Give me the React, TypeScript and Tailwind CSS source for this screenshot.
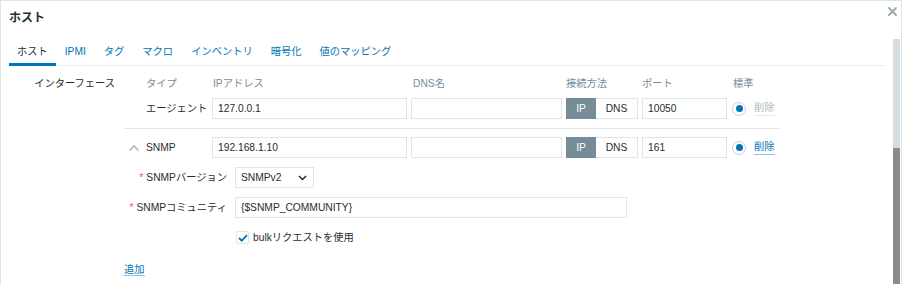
import React from 'react';

const FONT = '"Liberation Sans", "Noto Sans CJK JP", Arial, sans-serif';

/* ── small pieces ── */
const TextInput = ({ value = '', width }: { value?: string; width: string }) => (
  <div className={`${width} h-[21px] border border-[#dfe4e7] bg-white px-[5px] flex items-center text-[#1f2c33]`}>
    {value}
  </div>
);

const ConnToggle = () => (
  <div className="w-[72px] h-[21px] flex">
    <div className="w-[30px] h-full bg-[#768d99] text-white flex items-center justify-center">IP</div>
    <div className="flex-1 h-full border border-l-0 border-[#dfe4e7] text-[#1f2c33] flex items-center justify-center">DNS</div>
  </div>
);

const Radio = () => (
  <div className="w-[14px] h-[14px] rounded-full border border-[#c5d0d6] bg-white flex items-center justify-center">
    <div className="w-[7px] h-[7px] rounded-full bg-[#0275b8]" />
  </div>
);

const TABS = ['ホスト', 'IPMI', 'タグ', 'マクロ', 'インベントリ', '暗号化', '値のマッピング'];

const App = () => {
  return (
    <div
      className="w-[902px] h-[284px] relative overflow-hidden bg-white border-t border-x border-[#dfe4e7] text-[10.25px] leading-[15px] text-[#1f2c33] whitespace-nowrap"
      style={{ fontFamily: FONT }}
    >
      {/* Title */}
      <div className="h-[37px] pl-[8px] pt-[9px] text-[12px] leading-[17px] font-bold">ホスト</div>

      {/* close */}
      <svg className="absolute left-[887px] top-[6px] w-[9px] h-[9px]" viewBox="0 0 9 9">
        <path d="M1 1L8 8M8 1L1 8" stroke="#9aa7ae" strokeWidth="1.8" strokeLinecap="round" />
      </svg>

      {/* scrollbar */}
      <div className="absolute left-[892px] top-[38px] w-[7px] h-[246px] flex flex-col">
        <div className="h-[109px] bg-[#d5dde2]" />
        <div className="flex-1 bg-[#8a8a8a]" />
      </div>

      {/* Tabs */}
      <div className="ml-[8px] w-[876px] h-[28px] border-b border-[#ebeef0] flex">
        {TABS.map((t, i) => (
          <div
            key={t}
            className={
              i === 0
                ? 'px-[8px] flex items-center text-[#1f2c33] border-b-[3px] border-[#0275b8] -mb-px pt-[2px]'
                : 'px-[9px] flex items-center text-[#0275b8]'
            }
          >
            {t}
          </div>
        ))}
      </div>

      {/* Body */}
      <div className="flex pt-[8px]">
        <div className="w-[114px] h-[18px] flex items-center justify-end">インターフェース</div>

        <div className="ml-[9px] w-[655px]">
          {/* header */}
          <div className="h-[18px] flex items-center gap-[4px] text-[#768d99]">
            <div className="w-[84px] pl-[22px]">タイプ</div>
            <div className="w-[195px] pl-[1px]">IPアドレス</div>
            <div className="w-[151px] pl-[2px]">DNS名</div>
            <div className="w-[72px]">接続方法</div>
            <div className="w-[85px]">ポート</div>
            <div className="pl-[2px]">標準</div>
          </div>

          {/* agent row */}
          <div className="mt-[6px] h-[21px] flex items-center gap-[4px]">
            <div className="w-[84px] pl-[22px]">エージェント</div>
            <TextInput width="w-[195px]" value="127.0.0.1" />
            <TextInput width="w-[151px]" />
            <ConnToggle />
            <TextInput width="w-[85px]" value="10050" />
            <div className="ml-[1px] flex items-center">
              <Radio />
              <span className="ml-[8px] text-[#acbbc2] border-b border-[#e6ebee] leading-[14px]">削除</span>
            </div>
          </div>

          <div className="mt-[9px] border-t border-[#dfe4e7]" />

          {/* snmp row */}
          <div className="mt-[8px] h-[21px] flex items-center gap-[4px]">
            <div className="w-[84px] flex items-center">
              <svg className="ml-[4px] w-[12px] h-[8px]" viewBox="0 0 12 8">
                <path d="M1.5 6.5L6 2L10.5 6.5" fill="none" stroke="#aab8c0" strokeWidth="1.6" />
              </svg>
              <span className="ml-[6px]">SNMP</span>
            </div>
            <TextInput width="w-[195px]" value="192.168.1.10" />
            <TextInput width="w-[151px]" />
            <ConnToggle />
            <TextInput width="w-[85px]" value="161" />
            <div className="ml-[1px] flex items-center">
              <Radio />
              <span className="ml-[8px] text-[#0275b8] border-b border-[#8cc4e6] leading-[14px]">削除</span>
            </div>
          </div>

          {/* SNMP version */}
          <div className="mt-[9px] h-[21px] flex items-center">
            <div className="w-[111px] pr-[8px] flex justify-end items-center">
              <span className="text-[#e45959] mr-[3px]">*</span>SNMPバージョン
            </div>
            <div className="w-[79px] h-[21px] border border-[#dfe4e7] flex items-center justify-between pl-[5px] pr-[6px]">
              <span>SNMPv2</span>
              <svg className="w-[9px] h-[6px]" viewBox="0 0 9 6">
                <path d="M1 1L4.5 4.5L8 1" fill="none" stroke="#1f2c33" strokeWidth="1.5" />
              </svg>
            </div>
          </div>

          {/* SNMP community */}
          <div className="mt-[9px] h-[21px] flex items-center">
            <div className="w-[111px] pr-[8px] flex justify-end items-center">
              <span className="text-[#e45959] mr-[3px]">*</span>SNMPコミュニティ
            </div>
            <TextInput width="w-[392px]" value="{$SNMP_COMMUNITY}" />
          </div>

          {/* bulk */}
          <div className="mt-[9px] h-[21px] flex items-center pl-[112px]">
            <div className="w-[13px] h-[13px] rounded-[2px] border border-[#dfe4e7] flex items-center justify-center">
              <svg className="w-[10px] h-[8px]" viewBox="0 0 10 8">
                <path d="M1 4L3.8 6.7L9 1.2" fill="none" stroke="#0275b8" strokeWidth="1.8" />
              </svg>
            </div>
            <span className="ml-[4px]">bulkリクエストを使用</span>
          </div>

          {/* add */}
          <div className="mt-[14px]">
            <span className="text-[#0275b8] border-b border-[#8cc4e6]">追加</span>
          </div>
        </div>
      </div>
    </div>
  );
};

export default App;
